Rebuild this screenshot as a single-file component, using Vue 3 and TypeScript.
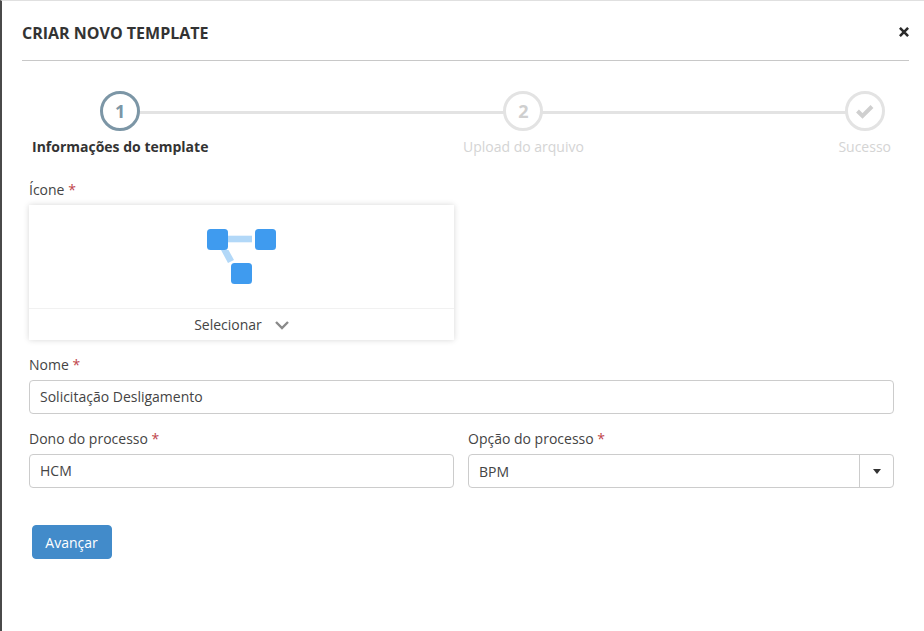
<script setup lang="ts">
interface Step { label: string; mark: string; state: string }
const steps: Step[] = [
  { label: 'Informações do template', mark: '1', state: 'active' },
  { label: 'Upload do arquivo', mark: '2', state: 'idle' },
  { label: 'Sucesso', mark: 'check', state: 'idle' },
]
</script>

<template>
  <div class="page">
    <header class="head">
      <h1 class="title">CRIAR NOVO TEMPLATE</h1>
      <span class="close">
        <svg width="10" height="10" viewBox="0 0 10 10"><path d="M0.9 0.9L9.1 9.1M9.1 0.9L0.9 9.1" stroke="#2b2b2b" stroke-width="2.6" fill="none"/></svg>
      </span>
    </header>

    <div class="stepper">
      <div class="track"></div>
      <div v-for="s in steps" :key="s.label" class="step" :class="s.state">
        <div class="circle">
          <svg v-if="s.mark === 'check'" width="20" height="16" viewBox="0 0 20 16"><path d="M2.5 8L7.5 13L17 3.5" stroke="#cfcfcf" stroke-width="4" fill="none"/></svg>
          <template v-else>{{ s.mark }}</template>
        </div>
        <div class="step-label">{{ s.label }}</div>
      </div>
    </div>

    <div class="form">
      <label class="lbl">Ícone <i>*</i></label>
      <div class="card">
        <div class="card-body">
          <svg width="72" height="60" viewBox="0 0 72 60">
            <rect x="22" y="7.7" width="24" height="6.6" fill="#b2d8f8"/>
            <path d="M15 22H22.5L28 32L22 35Z" fill="#b2d8f8"/>
            <rect x="1" y="1" width="21" height="21" rx="3.5" fill="#3f9bef"/>
            <rect x="49" y="1" width="21" height="21" rx="3.5" fill="#3f9bef"/>
            <rect x="25" y="35" width="21" height="21" rx="3.5" fill="#3f9bef"/>
          </svg>
        </div>
        <div class="card-foot">
          <span>Selecionar</span>
          <svg width="16" height="10" viewBox="0 0 16 10"><path d="M2 2L8 8L14 2" stroke="#8a8a8a" stroke-width="2.4" fill="none"/></svg>
        </div>
      </div>

      <label class="lbl name-lbl">Nome <i>*</i></label>
      <div class="input">Solicitação Desligamento</div>

      <div class="cols">
        <div class="col">
          <label class="lbl">Dono do processo <i>*</i></label>
          <div class="input">HCM</div>
        </div>
        <div class="col">
          <label class="lbl">Opção do processo <i>*</i></label>
          <div class="input select">
            <span class="value">BPM</span>
            <span class="caret-box"><span class="caret"></span></span>
          </div>
        </div>
      </div>

      <button class="next" type="button">Avançar</button>
    </div>
  </div>
</template>

<style>
html, body { margin: 0; background: #fff; }
</style>

<style scoped>
.page {
  box-sizing: border-box;
  width: 924px;
  height: 631px;
  overflow: hidden;
  background: #fff;
  border-top: 1px solid #e0e0e0;
  border-left: 2px solid #4a4a4a;
  padding: 0 14px 0 20px;
  font-family: "Open Sans", "Liberation Sans", sans-serif;
  font-size: 14px;
  color: #333;
}
.head {
  display: flex;
  align-items: center;
  justify-content: space-between;
  border-bottom: 1px solid #c8c8c8;
  margin-right: 1px;
  padding-top: 4px;
  height: 55px;
}
.title {
  margin: 0;
  font-size: 16px;
  font-weight: 700;
  color: #333;
}
.close {
  display: flex;
  margin-top: -2px;
}
.stepper {
  position: relative;
  display: flex;
  justify-content: space-between;
  margin: 30px 19px 0 10px;
}
.track {
  position: absolute;
  left: 88px;
  right: 26px;
  top: 20px;
  height: 3px;
  background: #e3e3e3;
}
.step {
  position: relative;
  display: flex;
  flex-direction: column;
  align-items: center;
}
.circle {
  box-sizing: border-box;
  width: 40px;
  height: 40px;
  border-radius: 50%;
  border: 3px solid #e3e3e3;
  background: #fff;
  display: flex;
  align-items: center;
  justify-content: center;
  font-size: 18px;
  font-weight: 700;
  color: #cfcfcf;
}
.step.active .circle {
  border-color: #7c96a6;
  color: #7c96a6;
}
.step-label {
  margin-top: 6px;
  line-height: 20px;
  font-size: 14px;
  color: #d4d4d4;
}
.step.active .step-label {
  font-weight: 700;
  color: #333;
}
.form {
  margin: 23px 16px 0 7px;
  display: flex;
  flex-direction: column;
  align-items: flex-start;
}
.lbl {
  display: block;
  line-height: 20px;
  color: #444;
}
.lbl i {
  font-style: normal;
  color: #c0444a;
}
.card {
  box-sizing: border-box;
  width: 425px;
  height: 135px;
  margin-top: 5px;
  box-shadow: 0 0 6px rgba(0, 0, 0, 0.16);
  display: flex;
  flex-direction: column;
}
.card-body {
  flex: 1;
  display: flex;
  justify-content: center;
  align-items: flex-start;
  padding-top: 23px;
  padding-left: 1px;
  border-bottom: 1px solid #f1f1f1;
}
.card-foot {
  height: 31px;
  display: flex;
  align-items: center;
  justify-content: center;
  gap: 12px;
  padding-left: 1px;
  color: #444;
}
.name-lbl {
  margin-top: 15px;
}
.input {
  box-sizing: border-box;
  width: 100%;
  height: 34px;
  margin-top: 5px;
  padding: 0 10px 1px;
  border: 1px solid #ccc;
  border-radius: 4px;
  display: flex;
  align-items: center;
  color: #444;
  background: #fff;
}
.cols {
  width: 100%;
  display: grid;
  grid-template-columns: 425px 426px;
  column-gap: 14px;
  margin-top: 15px;
}
.select {
  padding: 0 0 0 10px;
  justify-content: space-between;
}
.caret-box {
  width: 33px;
  height: 100%;
  border-left: 1px solid #ccc;
  display: flex;
  align-items: center;
  justify-content: center;
}
.caret {
  width: 0;
  height: 0;
  border-left: 4.5px solid transparent;
  border-right: 4.5px solid transparent;
  border-top: 5px solid #333;
}
.next {
  margin: 37px 0 0 3px;
  width: 80px;
  height: 34px;
  border: 1px solid #428bca;
  border-radius: 4px;
  background: #428bca;
  color: #fff;
  font-family: inherit;
  font-size: 14px;
  padding: 0 1px 0 0;
}
</style>
